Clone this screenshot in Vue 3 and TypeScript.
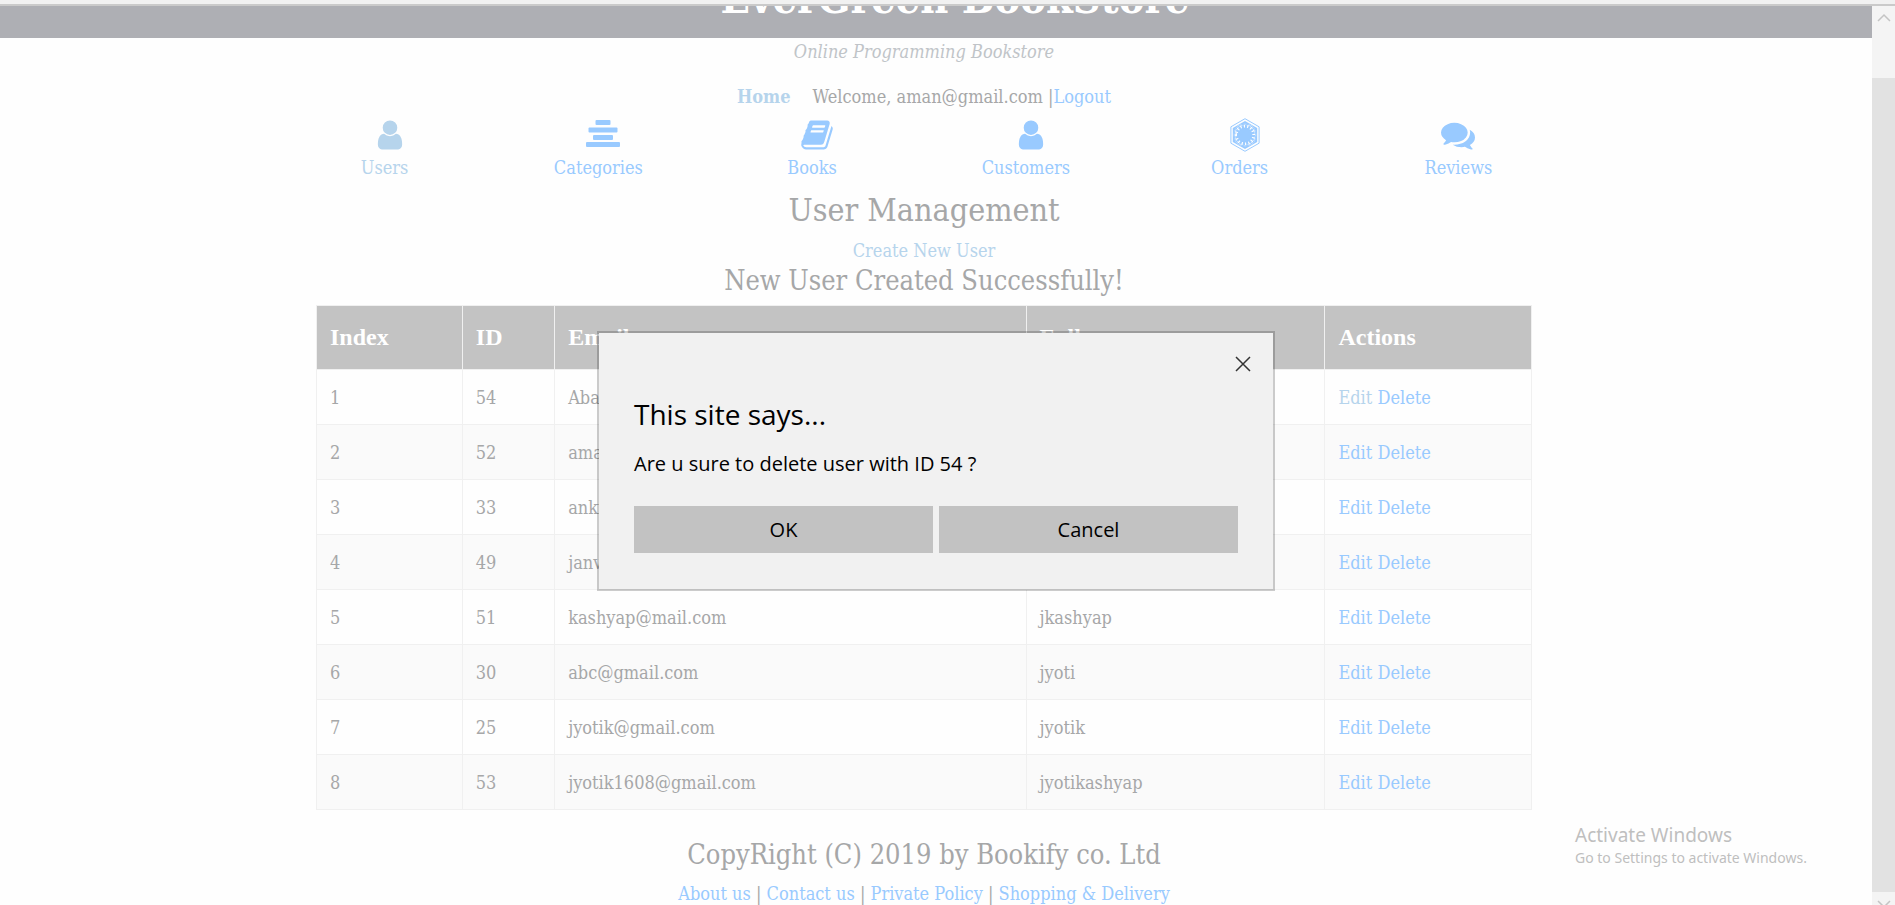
<script setup lang="ts">
import { ref } from 'vue'

interface User {
  id: number
  email: string
  name: string
}

interface MenuItem {
  label: string
  icon: 'user' | 'list' | 'book' | 'order' | 'comments'
  active?: boolean
}

const menu: MenuItem[] = [
  { label: 'Users', icon: 'user', active: true },
  { label: 'Categories', icon: 'list' },
  { label: 'Books', icon: 'book' },
  { label: 'Customers', icon: 'user' },
  { label: 'Orders', icon: 'order' },
  { label: 'Reviews', icon: 'comments' },
]

const users: User[] = [
  { id: 54, email: 'Aba@gmail.com', name: 'Aba' },
  { id: 52, email: 'aman@gmail.com', name: 'aman' },
  { id: 33, email: 'ankit@gmail.com', name: 'ankit' },
  { id: 49, email: 'janvi@gmail.com', name: 'janvi' },
  { id: 51, email: 'kashyap@mail.com', name: 'jkashyap' },
  { id: 30, email: 'abc@gmail.com', name: 'jyoti' },
  { id: 25, email: 'jyotik@gmail.com', name: 'jyotik' },
  { id: 53, email: 'jyotik1608@gmail.com', name: 'jyotikashyap' },
]

const footerLinks = ['About us', 'Contact us', 'Private Policy', 'Shopping & Delivery']

const pendingId = ref<number | null>(54)
const askDelete = (id: number) => {
  pendingId.value = id
}
const closeDialog = () => {
  pendingId.value = null
}
</script>

<template>
  <div class="window">
    <div class="chrome-edge"></div>
    <div class="viewport">
      <div class="page">
        <header class="banner"><h1>EverGreen BookStore</h1></header>
        <div class="content">
          <p class="slogan">Online Programming Bookstore</p>
          <div class="session">
            <a href="#" class="home">Home</a>
            <span>Welcome, aman@gmail.com |<a href="#">Logout</a></span>
          </div>

          <nav class="menu">
            <a v-for="item in menu" :key="item.label" href="#" :class="{ visited: item.active }">
              <svg v-if="item.icon === 'user'" viewBox="0 0 1792 1792" aria-hidden="true">
                <path d="M1536 1399q0 109-62.5 187t-150.5 78h-854q-88 0-150.5-78t-62.5-187q0-85 8.5-160.5t31.5-152 58.5-131 94-89 134.5-34.5q131 128 313 128t313-128q76 0 134.5 34.5t94 89 58.5 131 31.5 152 8.5 160.5zm-256-887q0 159-112.5 271.5t-271.5 112.5-271.5-112.5-112.5-271.5 112.5-271.5 271.5-112.5 271.5 112.5 112.5 271.5z" />
              </svg>
              <svg v-else-if="item.icon === 'list'" viewBox="0 0 34 34" aria-hidden="true">
                <rect x="9.5" y="2" width="15" height="5" rx="1" />
                <rect x="2.5" y="9.5" width="29" height="5" rx="1" />
                <rect x="7" y="17" width="20" height="5" rx="1" />
                <rect x="0" y="24" width="34" height="5" rx="1" />
              </svg>
              <svg v-else-if="item.icon === 'book'" viewBox="0 0 1792 1792" aria-hidden="true">
                <path d="M1703 478q40 57 18 129l-275 906q-19 64-76.5 107.5t-122.5 43.5h-923q-77 0-148.5-53.5t-99.5-131.5q-24-67-2-127 0-4 3-27t4-37q1-8-3-21.5t-3-19.5q2-11 8-21t16.5-23.5 16.5-23.5q23-38 45-91.5t30-91.5q3-10 .5-30t-.5-28q3-11 17-28t17-23q21-36 42-92t25-90q1-9-2.5-32t.5-28q4-13 22-30.5t22-22.5q19-26 42.5-84.5t27.5-96.5q1-8-3-25.5t-2-26.5q2-8 9-18t18-23 17-21q8-12 16.5-30.5t15-35 16-36 19.5-32 26.5-23.5 36-11.5 47.5 5.5l-1 3q38-9 51-9h761q74 0 114 56t18 130l-274 906q-36 119-71.5 153.5t-128.5 34.5h-869q-27 0-38 15-11 16-1 43 24 70 144 70h923q29 0 56-15.5t35-41.5l300-987q7-22 5-57 38 15 59 43zm-1064 2q-4 13 2 22.5t20 9.5h608q13 0 25.5-9.5t16.5-22.5l21-64q4-13-2-22.5t-20-9.5h-608q-13 0-25.5 9.5t-16.5 22.5zm-83 256q-4 13 2 22.5t20 9.5h608q13 0 25.5-9.5t16.5-22.5l21-64q4-13-2-22.5t-20-9.5h-608q-13 0-25.5 9.5t-16.5 22.5z" />
              </svg>
              <svg v-else-if="item.icon === 'order'" viewBox="0 0 34 34" aria-hidden="true">
                <path class="line" d="M17 .7 31.1 8.8V25.2L17 33.3 2.9 25.2V8.8Z" />
                <path d="M17 3 29.2 10V24L17 31 4.8 24V10Z" />
                <circle class="gap" cx="17" cy="17" r="11.2" />
                <circle class="rim" cx="17" cy="17" r="10.9" />
                <circle cx="17" cy="17" r="7.4" />
                <circle class="rays" cx="17" cy="17" r="8" pathLength="32" />
              </svg>
              <svg v-else viewBox="0 0 1792 1792" aria-hidden="true">
                <path d="M1408 768q0 139-94 257t-256.5 186.5-353.5 68.5q-86 0-176-16-124 88-278 128-36 9-86 16h-3q-11 0-20.5-8t-11.5-21q-1-3-1-6.5t.5-6.5 2-6l2.5-5 3.5-5.5 4-5 4.5-5 4-4.5q5-6 23-25t26-29.5 22.5-29 25-38.5 20.5-44q-124-72-195-177t-71-224q0-139 94-257t256.5-186.5 353.5-68.5 353.5 68.5 256.5 186.5 94 257zm384 256q0 120-71 224.5t-195 176.5q10 24 20.5 44t25 38.5 22.5 29 26 29.5 23 25q1 1 4 4.5t4.5 5 4 5 3.5 5.5l2.5 5 2 6 .5 6.5-1 6.5q-3 14-13 22t-22 7q-50-7-86-16-154-40-278-128-90 16-176 16-271 0-472-132 58 4 88 4 161 0 309-45t264-129q125-92 192-212t67-254q0-77-23-152 129 71 204 178t75 230z" />
              </svg>
              <span>{{ item.label }}</span>
            </a>
          </nav>

          <h2>User Management</h2>
          <a href="#" class="create visited">Create New User</a>
          <h3>New User Created Successfully!</h3>

          <table>
            <colgroup>
              <col class="c-index" /><col class="c-id" /><col class="c-email" /><col class="c-name" /><col class="c-actions" />
            </colgroup>
            <thead>
              <tr><th>Index</th><th>ID</th><th>Email</th><th>Full name</th><th>Actions</th></tr>
            </thead>
            <tbody>
              <tr v-for="(user, i) in users" :key="user.id">
                <td>{{ i + 1 }}</td>
                <td>{{ user.id }}</td>
                <td>{{ user.email }}</td>
                <td>{{ user.name }}</td>
                <td>
                  <a href="#" :class="{ visited: i === 0 }">Edit</a>{{ ' ' }}<a href="#" @click.prevent="askDelete(user.id)">Delete</a>
                </td>
              </tr>
            </tbody>
          </table>

          <footer>
            <h3>CopyRight (C) 2019 by Bookify co. Ltd</h3>
            <p>
              <template v-for="(link, i) in footerLinks" :key="link"><template v-if="i"> | </template><a href="#">{{ link }}</a></template>
            </p>
          </footer>
        </div>
      </div>

      <div class="scrollbar" aria-hidden="true">
        <svg viewBox="0 0 23 23"><path d="M6 15 12 9 18 15" /></svg>
        <div class="thumb"></div>
        <svg viewBox="0 0 23 23"><path d="M6 9 12 15 18 9" /></svg>
      </div>
    </div>

    <aside class="watermark">
      <strong>Activate Windows</strong>
      <span>Go to Settings to activate Windows.</span>
    </aside>

    <div v-if="pendingId !== null" class="backdrop">
      <section class="dialog" role="dialog" aria-labelledby="dialog-title">
        <button class="close" type="button" aria-label="Close" @click="closeDialog">
          <svg viewBox="0 0 16 16"><path d="M1 1 15 15M15 1 1 15" /></svg>
        </button>
        <h4 id="dialog-title">This site says...</h4>
        <p>Are u sure to delete user with ID {{ pendingId }} ?</p>
        <div class="buttons">
          <button type="button" @click="closeDialog">OK</button>
          <button type="button" @click="closeDialog">Cancel</button>
        </div>
      </section>
    </div>
  </div>
</template>

<style>
body {
  overflow: hidden;
}
</style>

<style scoped>
.window {
  position: relative;
  display: flex;
  flex-direction: column;
  height: 100vh;
  overflow: hidden;
  background: #fefefe;
  color: #a6a7a8;
  font: 18px/27px "Roboto Slab", "DejaVu Serif Condensed", "DejaVu Serif", serif;
}
.chrome-edge {
  flex: none;
  height: 4px;
  background: #f1f1f1;
  border-bottom: 2px solid #cacaca;
}
.viewport {
  flex: 1;
  min-height: 0;
  display: grid;
  grid-template-columns: 1fr 23px;
}
.page {
  min-width: 0;
  overflow: hidden;
}
h1, h2, h3, h4, p {
  margin: 0;
  font-weight: 400;
}
a {
  color: #99caff;
  text-decoration: none;
}
a.visited, a.home {
  color: #b6d4ec;
}
.banner {
  display: flex;
  justify-content: center;
  align-items: flex-end;
  height: 32px;
  padding-left: 38px;
  overflow: hidden;
  background: #aeafb4;
}
h1 {
  padding-bottom: 12px;
  color: #fff;
  font-size: 43px;
  line-height: 56px;
  font-weight: 700;
}
.content {
  display: flex;
  flex-direction: column;
  align-items: center;
  padding-right: 24px;
}
.slogan {
  color: #c0c4c8;
  font-style: italic;
}
.session {
  display: flex;
  gap: 22px;
  margin: 18px 0 8px;
}
.home {
  font-weight: 700;
}
.menu {
  display: grid;
  grid-template-columns: repeat(6, 1fr);
  width: 69.4%;
}
.menu a {
  display: flex;
  flex-direction: column;
  align-items: center;
  gap: 2px;
}
.menu a:not(:last-child) span {
  padding-right: 10px;
}
.menu svg {
  width: 34px;
  height: 34px;
  fill: currentColor;
}
.menu .line, .menu .rim {
  fill: none;
  stroke: currentColor;
  stroke-width: 1;
}
.menu .gap {
  fill: #fefefe;
}
.menu .rays {
  fill: none;
  stroke: currentColor;
  stroke-width: 4;
  stroke-dasharray: 1.3 0.7;
}
h2 {
  margin: 10px 0 8px;
  font-size: 32px;
  line-height: 38px;
}
h3 {
  font-size: 27px;
  line-height: 34px;
}
table {
  width: 65.8%;
  margin-top: 7px;
  table-layout: fixed;
  border-collapse: collapse;
}
.c-index { width: 12%; }
.c-id { width: 7.6%; }
.c-email { width: 38.8%; }
.c-name { width: 24.6%; }
.c-actions { width: 17%; }
th, td {
  padding: 0 13px;
  border: 1px solid #f0f0f0;
  text-align: left;
}
th {
  height: 61px;
  padding-bottom: 2px;
  background: #c3c3c3;
  color: #fff;
  font: 700 24px/28px "Liberation Serif", serif;
}
td {
  height: 54px;
}
tbody tr:nth-child(even) {
  background: #fafafa;
}
footer {
  display: flex;
  flex-direction: column;
  align-items: center;
  gap: 8px;
  margin-top: 28px;
}
.scrollbar {
  display: flex;
  flex-direction: column;
  background: #f4f4f4;
}
.scrollbar svg {
  flex: none;
  width: 23px;
  height: 23px;
  fill: none;
  stroke: #c4c4c4;
  stroke-width: 1.5;
}
.thumb {
  flex: 1;
  margin-top: 49px;
  background: #e2e2e2;
}
.scrollbar svg:last-child {
  margin-bottom: -10px;
}
.watermark {
  position: absolute;
  right: 80px;
  bottom: 37px;
  display: flex;
  flex-direction: column;
  width: 240px;
  color: #bfbfbf;
  font: 14px/20px "Segoe UI", "Noto Sans", sans-serif;
}
.watermark strong {
  font-size: 19px;
  line-height: 26px;
  font-weight: 400;
}
.backdrop {
  position: absolute;
  inset: 0;
  display: grid;
  place-items: center;
  padding: 17px 23px 0 0;
  box-sizing: border-box;
}
.dialog {
  position: relative;
  box-sizing: border-box;
  width: 678px;
  padding: 62px 35px 36px;
  border: 2px solid rgba(0, 0, 0, 0.2);
  background: #f1f1f1;
  background-clip: padding-box;
  color: #000;
  font: 20px/28px "Segoe UI", "Open Sans", sans-serif;
}
.dialog h4 {
  margin-bottom: 17px;
  font-size: 28px;
  line-height: 38px;
}
.buttons {
  display: grid;
  grid-template-columns: 1fr 1fr;
  gap: 6px;
  margin-top: 28px;
}
.dialog button {
  padding: 0;
  border: 0;
  background: #c2c2c2;
  color: #000;
  font: inherit;
}
.buttons button {
  height: 47px;
}
.dialog .close {
  position: absolute;
  top: 23px;
  right: 22px;
  display: flex;
  background: none;
}
.close svg {
  width: 16px;
  height: 16px;
  fill: none;
  stroke: #333;
  stroke-width: 1.5;
}
</style>
